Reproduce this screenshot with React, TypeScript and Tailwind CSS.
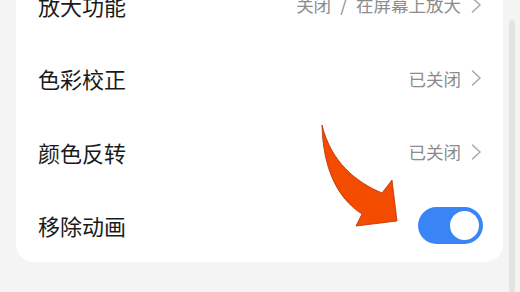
import React from "react";

const font = { fontFamily: '"Noto Sans CJK SC", "Noto Sans", sans-serif' };

function Chevron() {
  return (
    <svg width="11" height="16" viewBox="0 0 11 16" className="ml-[10px]">
      <polyline points="1.5,1 9,8 1.5,15" fill="none" stroke="#ababab" strokeWidth="1.6" strokeLinecap="round" strokeLinejoin="round" />
    </svg>
  );
}

function Row({ title, value, toggle }: { title: string; value?: React.ReactNode; toggle?: boolean }) {
  return (
    <div className="flex h-[73.5px] items-center justify-between pl-[22px] pr-[21px]">
      <span className="text-[22px] leading-none text-[#1a1a1a]">{title}</span>
      {toggle ? (
        <div className="mr-[-1px] flex h-[37px] w-[65px] items-center justify-end rounded-full bg-[#3a85f6] pr-[4px]">
          <div className="h-[29px] w-[29px] rounded-full bg-white" />
        </div>
      ) : (
        <div className="flex items-center">
          <span className="text-[17.5px] leading-none text-[#8c8c8c]">{value}</span>
          <Chevron />
        </div>
      )}
    </div>
  );
}

export default function App() {
  return (
    <div className="relative h-[292px] w-[520px] overflow-hidden bg-[#f4f4f4]" style={font}>
      <div className="flex items-start">
        <div className="ml-[16px] mt-[-32px] w-[487px] rounded-b-[18px] bg-white">
          <Row
            title="放大功能"
            value={
              <>
                关闭<span className="mx-[9px]">/</span>在屏幕上放大
              </>
            }
          />
          <Row title="色彩校正" value="已关闭" />
          <Row title="颜色反转" value="已关闭" />
          <Row title="移除动画" toggle />
        </div>
        <div className="ml-[6px] mt-[20px] h-[300px] w-[6px] rounded-t-full bg-[#e4e4e4]" />
      </div>
      <svg className="absolute left-0 top-0" width="520" height="292" viewBox="0 0 520 292">
        <path
          d="M322,125 C323,168 337,198 362,214 L356,226 L397,221 L392,180 L382,193 C356,182 331,162 322,125 Z"
          fill="#f34c00"
          stroke="#b83000"
          strokeWidth="0.8"
          strokeLinejoin="miter"
        />
      </svg>
    </div>
  );
}
